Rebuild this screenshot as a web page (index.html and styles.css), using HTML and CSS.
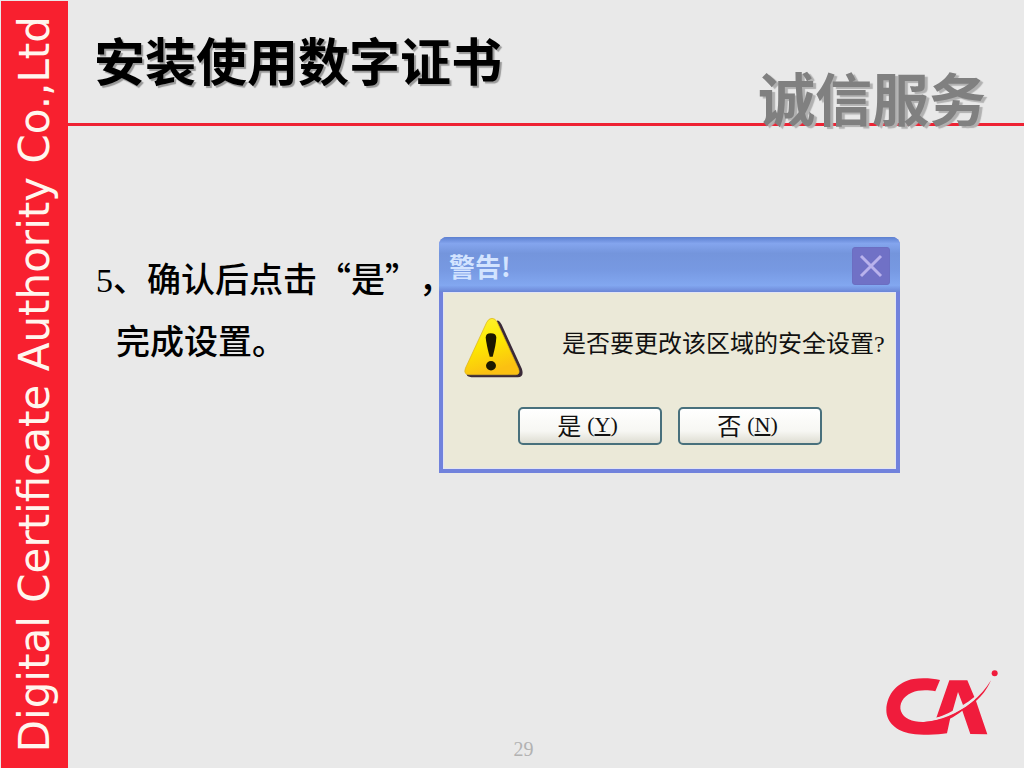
FILE: index.html
```html
<!DOCTYPE html>
<html lang="zh-CN">
<head>
    <meta charset="UTF-8">
    <meta name="viewport" content="width=device-width, initial-scale=1.0">
    <title>安装使用数字证书</title>
    <link rel="stylesheet" href="styles.css">
</head>
<body>
    <div class="slide">
        <aside class="sidebar">
            <span class="company">Digital Certificate Authority Co.,Ltd</span>
        </aside>

        <div class="main">
            <header class="header">
                <h1>安装使用数字证书</h1>
                <div class="slogan">诚信服务</div>
            </header>

            <main class="content">
                <div class="step">
                    <p><span class="number">5</span>、确认后点击“是”，</p>
                    <p class="step-next">完成设置。</p>
                </div>

                <section class="dialog" role="dialog" aria-labelledby="dialog-title">
                    <div class="dialog-bar">
                        <h2 id="dialog-title">警告!</h2>
                        <button class="close" type="button" aria-label="关闭">
                            <svg width="38" height="38" viewBox="0 0 38 38">
                                <path d="M9 9 L29 29 M29 9 L9 29" stroke="#b9b2ec" stroke-width="3" fill="none"/>
                            </svg>
                        </button>
                    </div>
                    <div class="dialog-body">
                        <div class="message">
                            <svg class="warning" width="62" height="63" viewBox="98 255 186 190">
                                <defs>
                                    <linearGradient id="yellow" x1="0" y1="0" x2="0.3" y2="1">
                                        <stop offset="0" stop-color="#fff23a"/>
                                        <stop offset="0.5" stop-color="#fdea00"/>
                                        <stop offset="1" stop-color="#fbc012"/>
                                    </linearGradient>
                                </defs>
                                <path d="M205 268 Q212 270 217 281 L278 414 Q286 439 266 440 L126 440 Q110 438 112 430 Z" fill="#3a2a38"/>
                                <path d="M188 262 Q198 262 204 274 L268 414 Q274 431 260 432 L118 432 Q101 431 108 412 L172 274 Q178 262 188 262 Z" fill="url(#yellow)" stroke="#d8ae20" stroke-width="2"/>
                                <path d="M169 320 Q169 307 184 307 Q201 307 201 320 Q200 342 190 378 L181 378 Q171 342 169 320 Z" fill="#1c1800"/>
                                <ellipse cx="185" cy="405" rx="15" ry="14" fill="#1c1800"/>
                            </svg>
                            <p>是否要更改该区域的安全设置<span class="mark">?</span></p>
                        </div>
                        <div class="buttons">
                            <button class="btn" type="button">是<span class="key">(<u>Y</u>)</span></button>
                            <button class="btn" type="button">否<span class="key">(<u>N</u>)</span></button>
                        </div>
                    </div>
                </section>
            </main>

            <footer class="footer">
                <span class="page-number">29</span>
                <svg class="logo" width="117" height="68" viewBox="70 55 351 204" role="img" aria-label="CA">
                    <g fill="#f01c3c">
                        <path d="M238 91 L224 125 C203 121 174 120 153 129 C127 140 114 163 121 185 C129 208 157 218 190 217 C222 215 249 208 270 200 L259 251 C233 256 180 256 153 252 C107 245 77 218 77 181 C78 133 112 96 158 88 C184 84 216 86 238 91 Z"/>
                        <path d="M266 92 L320 92 L341 142 C329 152 318 160 307 166 L292 127 L276 183 C260 192 244 199 227 204 Z"/>
                        <path d="M190 217 C239 214 289 193 333 158 C357 139 376 117 391 92 C378 122 363 139 346 154 L380 254 L329 253 L305 183 C291 193 280 201 267 207 C243 217 216 220 190 217 Z"/>
                        <circle cx="402" cy="71" r="9"/>
                    </g>
                    <path d="M216 209 C256 202 302 181 341 148" fill="none" stroke="#e9e9e9" stroke-width="4"/>
                </svg>
            </footer>
        </div>
    </div>
</body>
</html>
```
FILE: styles.css
```css
* {
    box-sizing: border-box;
}

body {
    margin: 0;
    background-color: #e9e9e9;
    color: #000;
    font-family: "Noto Sans CJK SC", sans-serif;
}

h1, h2, p {
    margin: 0;
}

.slide {
    display: flex;
    min-height: 100vh;
    padding: 1px 0 0 1px;
}

/* Red company strip */
.sidebar {
    display: flex;
    align-items: center;
    justify-content: center;
    flex: 0 0 67px;
    background-color: #f8202f;
}

.company {
    writing-mode: vertical-rl;
    transform: rotate(180deg);
    color: #fff6ee;
    font-family: "DejaVu Sans", sans-serif;
    font-size: 42px;
    line-height: 62px;
    white-space: nowrap;
}

.main {
    display: flex;
    flex-direction: column;
    flex: 1;
    min-width: 0;
}

/* Header */
.header {
    display: flex;
    align-items: flex-end;
    justify-content: space-between;
    padding: 28px 38px 0 26px;
    border-bottom: 3px solid #ee2233;
}

.header h1 {
    padding-bottom: 34px;
    font-size: 51px;
    line-height: 60px;
    font-weight: 700;
    text-shadow: 2px 2px 1px #999;
}

.slogan {
    margin-bottom: -2px;
    color: #808080;
    font-size: 57px;
    line-height: 58px;
    font-weight: 700;
    text-shadow: 3px 2px 1px #b0b0b0;
}

/* Step text and dialog */
.content {
    display: flex;
    align-items: flex-start;
    flex: 1;
    padding: 111px 28px 0;
}

.step {
    flex: 0 0 343px;
    min-width: 0;
    padding-top: 10px;
    font-size: 34px;
    line-height: 62px;
    font-weight: 500;
    text-spacing-trim: space-all;
    white-space: nowrap;
}

.number {
    font-family: "Liberation Serif", serif;
    line-height: 1;
}

.step-next {
    padding-left: 20px;
}

.dialog {
    flex: 0 1 461px;
    min-width: 0;
    border: 4px solid #7182dc;
    border-top: 0;
    border-radius: 8px 8px 0 0;
    background-color: #7182dc;
}

.dialog-bar {
    display: flex;
    align-items: center;
    justify-content: space-between;
    height: 55px;
    margin: 0 -4px;
    padding: 2px 10px 0;
    border-radius: 8px 8px 0 0;
    background: linear-gradient(#5d80d0, #84a5ee 12%, #7495dc 30%, #7799e2 60%, #82a7f0 88%, #6b86d6);
}

.dialog-bar h2 {
    color: #d3e4ff;
    font-size: 26px;
    line-height: 36px;
    font-weight: 700;
}

.close {
    width: 38px;
    height: 38px;
    padding: 0;
    border: 1px solid #6b6ec2;
    border-radius: 3px;
    background-color: #7071c6;
}

.close svg {
    display: block;
    margin: -1px;
}

.dialog-body {
    padding: 23px 0;
    border: 1px solid #e2e4f4;
    background-color: #ebe9d8;
}

.message {
    display: flex;
    align-items: center;
    gap: 38px;
    padding-left: 18px;
    color: #111;
    font-size: 24px;
    line-height: 36px;
    white-space: nowrap;
}

.message p {
    padding-bottom: 10px;
}

.mark {
    font-family: "Liberation Serif", serif;
}

.warning {
    flex: none;
}

.buttons {
    display: flex;
    justify-content: center;
    gap: 16px;
    padding-top: 28px;
}

.btn {
    display: flex;
    align-items: center;
    justify-content: center;
    gap: 6px;
    width: 144px;
    height: 38px;
    padding: 0 4px 2px 0;
    border: 2px solid #48707c;
    border-radius: 5px;
    background: linear-gradient(#fff, #f7f7f3 65%, #deddd2);
    color: #111;
    font-family: "Noto Sans CJK SC", sans-serif;
    font-size: 24px;
    line-height: 32px;
}

.key {
    font-family: "Liberation Serif", serif;
    font-size: 22px;
}

/* Footer */
.footer {
    display: grid;
    grid-template-columns: 1fr auto 1fr;
    padding: 0 23px 8px 0;
}

.page-number {
    grid-column: 2;
    align-self: end;
    padding-right: 22px;
    color: #b2b2b2;
    font-family: "Liberation Serif", serif;
    font-size: 20px;
    line-height: 22px;
}

.logo {
    justify-self: end;
    margin-bottom: 24px;
}
```
